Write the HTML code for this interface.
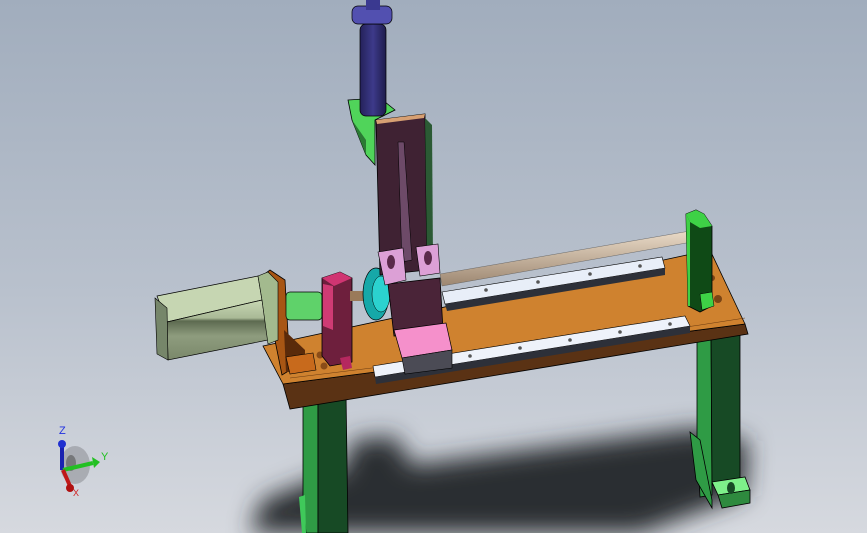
<!DOCTYPE html>
<html><head><meta charset="utf-8"><style>
html,body{margin:0;padding:0;}
body{width:867px;height:533px;overflow:hidden;background:linear-gradient(#a1adbd 0%,#b9c1cd 55%,#d6d9df 100%);font-family:"Liberation Sans",sans-serif;}
svg{display:block}
</style></head><body>
<svg width="867" height="533" viewBox="0 0 867 533" xmlns="http://www.w3.org/2000/svg">
<defs>
<filter id="b" x="-20%" y="-50%" width="140%" height="200%"><feGaussianBlur stdDeviation="12"/></filter>
<linearGradient id="rod" x1="0" y1="0" x2="0" y2="1"><stop offset="0" stop-color="#eadbc8"/><stop offset="1" stop-color="#9c8670"/></linearGradient>
<linearGradient id="cyl" x1="0" y1="0" x2="1" y2="0"><stop offset="0" stop-color="#24215a"/><stop offset=".5" stop-color="#3d3a8a"/><stop offset="1" stop-color="#1e1c4c"/></linearGradient>
<linearGradient id="mot" x1="0" y1="0" x2="0" y2="1"><stop offset="0" stop-color="#c8d8b4"/><stop offset=".3" stop-color="#a9b996"/><stop offset=".35" stop-color="#5d6a50"/><stop offset=".6" stop-color="#8e9c7e"/><stop offset="1" stop-color="#7a886a"/></linearGradient>
</defs>
<!-- shadow -->
<g filter="url(#b)" fill="#2c2e33">
<polygon points="250,533 262,500 345,468 352,440 395,436 412,465 700,428 748,442 745,495 640,533"/>
</g>
<!-- legs -->
<polygon points="303,400 318,398 318,533 306,533 303,500" fill="#2f9b45" stroke="#000" stroke-width=".8"/>
<polygon points="318,398 346,394 348,533 318,533" fill="#174a25" stroke="#000" stroke-width=".8"/>
<polygon points="299,497 305,495 306,533 302,533" fill="#3fc95a"/>
<polygon points="697,332 711,330 712,495 700,497 697,440" fill="#2f9b45" stroke="#000" stroke-width=".8"/>
<polygon points="711,330 740,326 740,480 712,485" fill="#174a25" stroke="#000" stroke-width=".8"/>
<polygon points="690,432 700,440 712,500 712,508 696,480" fill="#2f9b45" stroke="#000" stroke-width=".8"/>
<polygon points="712,482 745,477 750,490 718,495" fill="#7ef08a" stroke="#000" stroke-width=".8"/>
<polygon points="718,495 750,490 750,503 722,508" fill="#2e8a3e" stroke="#000" stroke-width=".8"/>
<ellipse cx="731" cy="488" rx="4" ry="6" fill="#174a25"/>
<!-- table -->
<polygon points="283,384 745,324 748,334 290,409" fill="#5a3214" stroke="#000" stroke-width=".8"/>
<polygon points="263,346 710,250 745,324 283,384" fill="#cf822f" stroke="#000" stroke-width=".8"/>
<polyline points="290,378 560,345 700,325 745,318" fill="none" stroke="#6a3a10" stroke-width=".6"/>
<circle cx="320" cy="355" r="3.5" fill="#8a4c18"/><circle cx="324" cy="366" r="3.5" fill="#8a4c18"/>
<circle cx="718" cy="299" r="4" fill="#7a4414"/><circle cx="712" cy="278" r="3" fill="#7a4414"/>
<!-- rails -->
<polygon points="442,292 662,257 665,268 445,304" fill="#e8eef8" stroke="#000" stroke-width=".6"/>
<polygon points="445,304 665,268 665,275 447,311" fill="#2d3039"/>
<polygon points="373,366 685,316 690,326 375,377" fill="#eef2fa" stroke="#000" stroke-width=".6"/>
<polygon points="375,377 690,326 690,333 376,384" fill="#2d3039"/>
<g fill="#555">
<circle cx="486" cy="290" r="1.8"/><circle cx="538" cy="282" r="1.8"/><circle cx="590" cy="274" r="1.8"/><circle cx="640" cy="266" r="1.8"/>
<circle cx="470" cy="356" r="1.8"/><circle cx="520" cy="348" r="1.8"/><circle cx="570" cy="340" r="1.8"/><circle cx="620" cy="332" r="1.8"/><circle cx="670" cy="324" r="1.8"/>
</g>
<!-- rod -->
<polygon points="440,274 690,231 692,242 442,286" fill="url(#rod)" stroke="#555" stroke-width=".4"/>
<!-- right upright -->
<polygon points="686,214 696,210 704,214 712,226 712,306 700,312 688,306" fill="#0f4a16" stroke="#000" stroke-width=".8"/>
<polygon points="686,214 696,210 704,214 712,226 700,228 690,222" fill="#3ed146"/>
<polygon points="686,214 690,222 690,306 688,306" fill="#3ed146"/>
<polygon points="700,294 712,292 714,306 702,310" fill="#3ed146" stroke="#000" stroke-width=".5"/>
<!-- motor bracket -->
<polygon points="262,276 270,270 285,280 290,370 282,375" fill="#a85614" stroke="#000" stroke-width=".8"/>
<polygon points="284,330 305,350 305,372 286,372" fill="#5a2a0a"/>
<polygon points="286,357 313,353 316,370 290,374" fill="#c86a1c" stroke="#000" stroke-width=".6"/>
<!-- motor -->
<polygon points="157,296 258,276 262,300 167,322" fill="#c6d6b2" stroke="#000" stroke-width=".7"/>
<polygon points="167,322 262,300 268,340 168,360" fill="url(#mot)" stroke="#000" stroke-width=".7"/>
<polygon points="155,298 167,308 168,360 157,354" fill="#76866a" stroke="#000" stroke-width=".6"/>
<polygon points="258,276 268,272 278,282 278,340 268,344 262,300" fill="#a3ba8e" stroke="#000" stroke-width=".6"/>
<!-- coupling -->
<rect x="286" y="292" width="36" height="28" rx="4" fill="#5fd26a" stroke="#000" stroke-width=".7"/>
<!-- red support -->
<polygon points="322,278 340,272 352,278 352,362 330,366 322,356" fill="#6e1f3d" stroke="#000" stroke-width=".8"/>
<polygon points="322,278 340,272 352,278 334,286" fill="#d03572"/>
<polygon points="323,284 333,286 333,330 323,326" fill="#cf3b74"/>
<polygon points="340,358 350,356 352,368 343,370" fill="#b5285f"/>
<!-- screw & bearing -->
<rect x="350" y="291" width="18" height="10" fill="#9a7a5a"/>
<ellipse cx="376" cy="294" rx="13" ry="26" fill="#16a8a8" stroke="#000" stroke-width=".7"/>
<ellipse cx="381" cy="294" rx="9" ry="18" fill="#2bd2cf" stroke="#000" stroke-width=".5"/>
<!-- carriage -->
<polygon points="388,284 440,278 443,330 394,336" fill="#4a2438" stroke="#000" stroke-width=".8"/>
<polygon points="394,330 446,323 452,350 402,358" fill="#f590cb" stroke="#000" stroke-width=".7"/>
<polygon points="402,358 452,350 452,368 405,374" fill="#4b4b55" stroke="#000" stroke-width=".6"/>
<!-- column & bracket -->
<polygon points="348,100 380,98 395,110 375,120 375,165 366,155 352,120" fill="#50d45a" stroke="#000" stroke-width=".8"/>
<polygon points="352,120 366,155 366,140" fill="#2b7a34"/>
<polygon points="376,120 425,114 427,270 380,275" fill="#3f2233" stroke="#000" stroke-width=".8"/>
<polygon points="376,120 425,114 424,118 377,124" fill="#d7a073"/>
<polygon points="398,142 404,142 412,260 402,262" fill="#6d4a68" stroke="#000" stroke-width=".5"/>
<polygon points="425,118 432,125 433,260 427,262" fill="#2b5a34"/>
<polygon points="378,252 403,248 406,280 385,285" fill="#dca0d6" stroke="#000" stroke-width=".6"/>
<polygon points="416,247 438,244 440,273 420,276" fill="#dca0d6" stroke="#000" stroke-width=".6"/>
<ellipse cx="391" cy="262" rx="4" ry="7" fill="#5a2a4a"/>
<ellipse cx="428" cy="258" rx="4" ry="7" fill="#5a2a4a"/>
<!-- cylinder -->
<rect x="360" y="24" width="26" height="92" rx="6" fill="url(#cyl)" stroke="#000" stroke-width=".7"/>
<rect x="352" y="6" width="40" height="18" rx="6" fill="#5250b0" stroke="#000" stroke-width=".7"/>
<rect x="366" y="0" width="14" height="10" fill="#3a3990"/>
<!-- triad -->
<ellipse cx="75" cy="465" rx="15" ry="19" fill="#8a8c92" opacity=".55"/>
<ellipse cx="71" cy="463" rx="5" ry="8" fill="#555" opacity=".6"/>
<line x1="62" y1="445" x2="62" y2="470" stroke="#1a22b0" stroke-width="4"/>
<circle cx="62" cy="444" r="4" fill="#2030d0"/>
<line x1="63" y1="470" x2="93" y2="463" stroke="#22c022" stroke-width="4"/>
<polygon points="92,457 100,462 94,468" fill="#22c022"/>
<line x1="63" y1="470" x2="70" y2="486" stroke="#c01818" stroke-width="4"/>
<circle cx="70" cy="488" r="4" fill="#b01010"/>
<text x="59" y="434" font-size="11" fill="#2030e0">Z</text>
<text x="101" y="460" font-size="11" fill="#20c020">Y</text>
<text x="73" y="496" font-size="9" fill="#d02020">X</text>
</svg>
</body></html>
